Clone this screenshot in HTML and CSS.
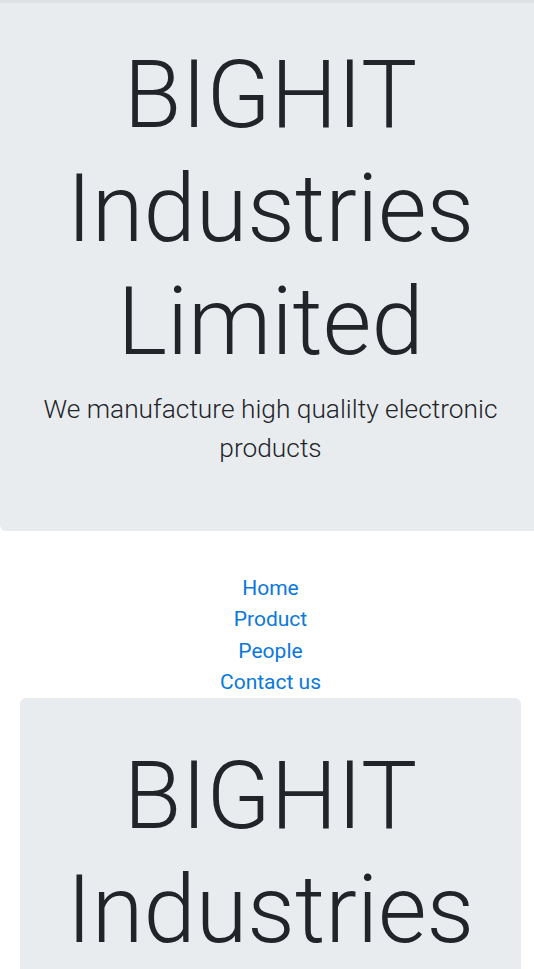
FILE: index.html
```html
<!DOCTYPE html>
<html lang="en">
<head>
<meta charset="utf-8">
<title>BIGHIT Industries Limited</title>
<link rel="stylesheet" href="styles.css">
</head>
<body>
  <div class="page">
    <header class="jumbotron jumbotron-top">
      <h1 class="display">BIGHIT Industries Limited</h1>
      <p class="lead">We manufacture high qualilty electronic products</p>
    </header>
    <nav class="nav">
      <a href="#">Home</a>
      <a href="#">Product</a>
      <a href="#">People</a>
      <a href="#">Contact us</a>
    </nav>
    <main class="container">
      <section class="jumbotron">
        <h1 class="display">BIGHIT Industries Limited</h1>
        <p class="lead">We manufacture high qualilty electronic products</p>
      </section>
    </main>
  </div>
</body>
</html>
```
FILE: styles.css
```css
html, body {
  margin: 0;
  padding: 0;
}
body {
  font-family: Roboto, "Liberation Sans", sans-serif;
  color: #212529;
  background: #fff;
  overflow: hidden;
}
.page {
  width: 541px;
}
.jumbotron {
  background: #e9ecef;
  border-radius: 6px;
  padding: 42px 21px;
  margin-bottom: 42px;
  text-align: center;
}
.jumbotron-top {
  padding-top: 36px;
  border-top: 3px solid #dfe2e5;
  border-top-left-radius: 0;
  border-top-right-radius: 0;
}
.display {
  font-size: 94px;
  font-weight: 300;
  line-height: 113.5px;
  margin: 0 0 10.5px;
}
.lead {
  font-size: 26.3px;
  font-weight: 300;
  line-height: 39px;
  margin: 0 0 21px;
}
.nav {
  display: flex;
  flex-direction: column;
  align-items: center;
}
.nav a {
  font-size: 21px;
  line-height: 31.3px;
  color: #0a78dc;
  text-decoration: none;
}
.container {
  padding: 0 20px;
}
.container .jumbotron {
  margin-bottom: 0;
}
```
